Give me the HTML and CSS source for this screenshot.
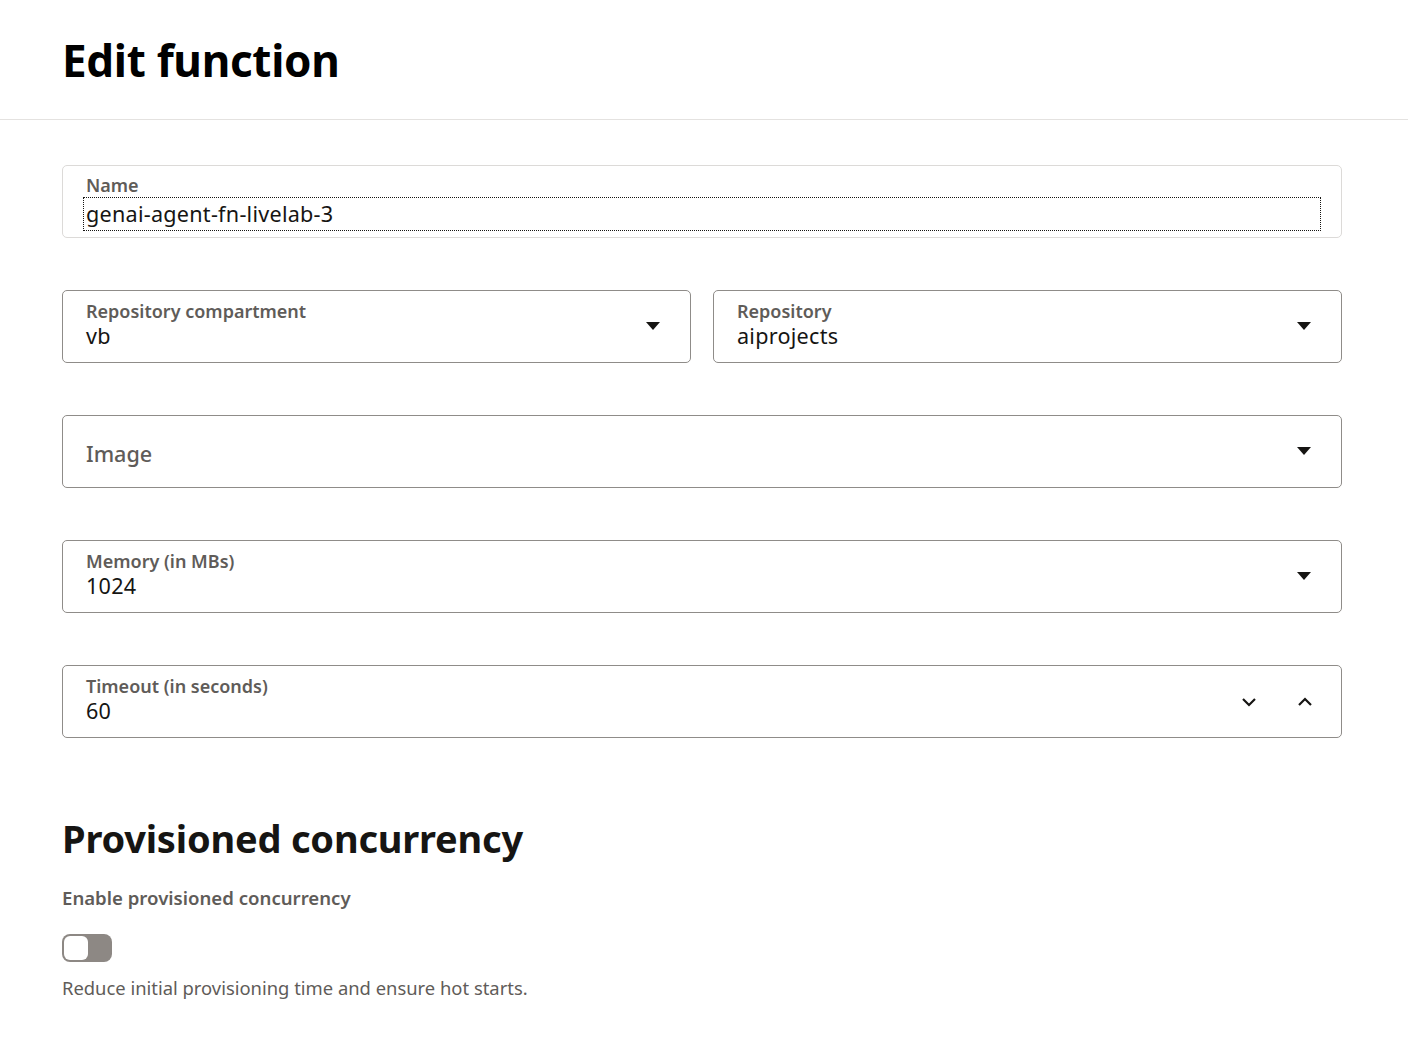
FILE: index.html
```html
<!DOCTYPE html>
<html lang="en">
<head>
<meta charset="utf-8">
<title>Edit function</title>
<link rel="stylesheet" href="styles.css">
</head>
<body>
<header class="page-header">
  <h1 class="title">Edit function</h1>
</header>
<main class="form">
  <div class="field field-light">
    <div class="label">Name</div>
    <div class="input-focus"><span class="value">genai-agent-fn-livelab-3</span></div>
  </div>

  <div class="row">
    <div class="field">
      <div class="field-body">
        <div class="label">Repository compartment</div>
        <div class="value">vb</div>
      </div>
      <svg class="caret" width="14" height="8" viewBox="0 0 14 8"><path d="M0 0h14L7 8z" fill="#161513"/></svg>
    </div>
    <div class="field">
      <div class="field-body">
        <div class="label">Repository</div>
        <div class="value">aiprojects</div>
      </div>
      <svg class="caret" width="14" height="8" viewBox="0 0 14 8"><path d="M0 0h14L7 8z" fill="#161513"/></svg>
    </div>
  </div>

  <div class="field">
    <div class="field-body">
      <div class="placeholder">Image</div>
    </div>
    <svg class="caret" width="14" height="8" viewBox="0 0 14 8"><path d="M0 0h14L7 8z" fill="#161513"/></svg>
  </div>

  <div class="field">
    <div class="field-body">
      <div class="label">Memory (in MBs)</div>
      <div class="value">1024</div>
    </div>
    <svg class="caret" width="14" height="8" viewBox="0 0 14 8"><path d="M0 0h14L7 8z" fill="#161513"/></svg>
  </div>

  <div class="field">
    <div class="field-body">
      <div class="label">Timeout (in seconds)</div>
      <div class="value">60</div>
    </div>
    <div class="steppers">
      <svg width="16" height="10" viewBox="0 0 16 10"><path d="M2 2l6 6 6-6" fill="none" stroke="#161513" stroke-width="2.2"/></svg>
      <svg width="16" height="10" viewBox="0 0 16 10"><path d="M2 8l6-6 6 6" fill="none" stroke="#161513" stroke-width="2.2"/></svg>
    </div>
  </div>

  <section class="section">
    <h2 class="section-title">Provisioned concurrency</h2>
    <div class="switch-label">Enable provisioned concurrency</div>
    <div class="switch"><span class="knob"></span></div>
    <p class="help">Reduce initial provisioning time and ensure hot starts.</p>
  </section>
</main>
</body>
</html>
```

FILE: styles.css
```css
html, body {
  margin: 0;
  padding: 0;
  background: #fff;
  font-family: "Noto Sans", "Open Sans", sans-serif;
  color: #161513;
}

.page-header {
  border-bottom: 1px solid #e4e2e0;
  padding: 0 62px;
  height: 120px;
  box-sizing: border-box;
}

.title {
  margin: 0;
  padding-top: 30px;
  font-size: 44px;
  font-weight: 700;
  line-height: 60px;
  letter-spacing: -0.3px;
  color: #000;
}

.form {
  padding: 45px 66px 0 62px;
  display: flex;
  flex-direction: column;
  gap: 52px;
}

.row {
  display: flex;
  gap: 22px;
}

.row .field {
  flex: 1;
}

.field {
  height: 73px;
  box-sizing: border-box;
  border: 1px solid #8f8c89;
  border-radius: 5px;
  display: flex;
  align-items: center;
  padding: 0 30px 0 23px;
}

.field-light {
  border-color: #dcdad8;
  flex-direction: column;
  align-items: stretch;
  justify-content: flex-start;
  padding: 9px 20px 0 20px;
}

.field-body {
  flex: 1;
  display: flex;
  flex-direction: column;
  justify-content: center;
}

.label {
  font-size: 18px;
  font-weight: 600;
  color: #5f5c59;
  line-height: 20px;
}

.field-body .label {
  line-height: 18px;
  margin-bottom: 1px;
}

.field-light .label {
  padding-left: 3px;
}

.value {
  font-size: 21.6px;
  line-height: 30px;
  letter-spacing: 0.25px;
  color: #161513;
}

.input-focus {
  margin-top: 2px;
  border: 1px dotted #161513;
  height: 34px;
  box-sizing: border-box;
  padding: 0 0 0 2px;
  display: flex;
  align-items: center;
}

.placeholder {
  font-size: 21.6px;
  font-weight: 500;
  color: #5f5c59;
  padding-top: 3px;
}

.caret {
  display: block;
  margin-top: -1px;
}

.steppers {
  display: flex;
  gap: 40px;
  margin-right: -2px;
  align-items: center;
}

.steppers svg {
  display: block;
}

.section {
  margin-top: 22px;
}

.section-title {
  margin: 0;
  font-size: 38px;
  font-weight: 700;
  line-height: 52px;
  color: #161513;
  letter-spacing: -0.2px;
}

.switch-label {
  margin-top: 22px;
  font-size: 18.6px;
  font-weight: 600;
  color: #5f5c59;
  line-height: 24px;
}

.switch {
  margin-top: 24px;
  width: 50px;
  height: 28px;
  border-radius: 8px;
  background: #8d8884;
  box-sizing: border-box;
  padding: 2px;
}

.knob {
  display: block;
  width: 24px;
  height: 24px;
  border-radius: 6px;
  background: #fff;
}

.help {
  margin: 14px 0 0;
  font-size: 18.4px;
  color: #5f5c59;
  line-height: 24px;
}
```
